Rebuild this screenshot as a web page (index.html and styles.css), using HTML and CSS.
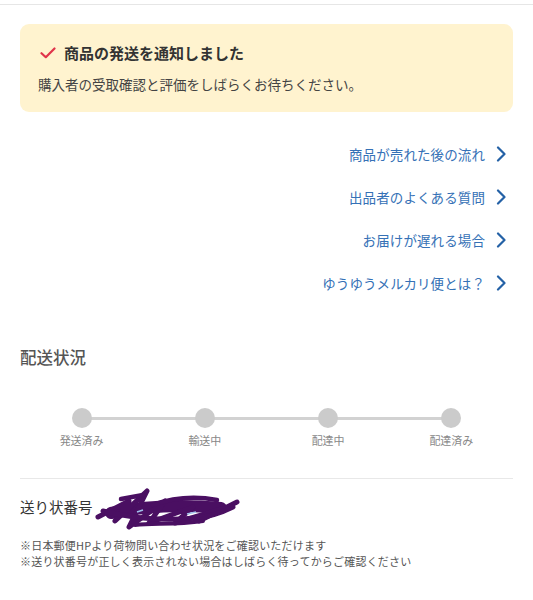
FILE: index.html
```html
<!DOCTYPE html>
<html lang="ja">
<head>
<meta charset="utf-8">
<link rel="stylesheet" href="styles.css">
</head>
<body>
<div class="topbar"></div>
<main class="page">
  <section class="notice">
    <div class="notice-title">
      <svg class="check" viewBox="0 0 16 12" width="16" height="12"><path d="M1.5 6.2 L5.8 10.2 L14.5 1.5" fill="none" stroke="#e0344a" stroke-width="2.2" stroke-linecap="round" stroke-linejoin="round"/></svg>
      <span>商品の発送を通知しました</span>
    </div>
    <p class="notice-text">購入者の受取確認と評価をしばらくお待ちください。</p>
  </section>

  <ul class="links">
    <li><a class="link">商品が売れた後の流れ<svg class="chev" viewBox="0 0 10 16" width="10" height="16"><path d="M2 1.5 L8.5 8 L2 14.5" fill="none" stroke="#2461a6" stroke-width="2.2" stroke-linecap="round" stroke-linejoin="round"/></svg></a></li>
    <li><a class="link">出品者のよくある質問<svg class="chev" viewBox="0 0 10 16" width="10" height="16"><path d="M2 1.5 L8.5 8 L2 14.5" fill="none" stroke="#2461a6" stroke-width="2.2" stroke-linecap="round" stroke-linejoin="round"/></svg></a></li>
    <li><a class="link">お届けが遅れる場合<svg class="chev" viewBox="0 0 10 16" width="10" height="16"><path d="M2 1.5 L8.5 8 L2 14.5" fill="none" stroke="#2461a6" stroke-width="2.2" stroke-linecap="round" stroke-linejoin="round"/></svg></a></li>
    <li><a class="link">ゆうゆうメルカリ便とは？<svg class="chev" viewBox="0 0 10 16" width="10" height="16"><path d="M2 1.5 L8.5 8 L2 14.5" fill="none" stroke="#2461a6" stroke-width="2.2" stroke-linecap="round" stroke-linejoin="round"/></svg></a></li>
  </ul>

  <h2 class="heading">配送状況</h2>

  <div class="progress">
    <div class="track"></div>
    <div class="step"><span class="dot"></span><span class="label">発送済み</span></div>
    <div class="step"><span class="dot"></span><span class="label">輸送中</span></div>
    <div class="step"><span class="dot"></span><span class="label">配達中</span></div>
    <div class="step"><span class="dot"></span><span class="label">配達済み</span></div>
  </div>

  <hr class="divider">

  <div class="tracking">
    <span class="tracking-label">送り状番号</span>
    <span class="tracking-no">
      <span class="tracking-num">000000000000</span>
      <svg class="scribble" viewBox="0 0 145 44" width="145" height="44">
        <g fill="none" stroke="#4a0f62" stroke-linecap="round" stroke-linejoin="round">
          <path d="M16 26 C45 20 85 17 126 21" stroke-width="12"/>
          <path d="M3 30 L34 14 L20 34 L52 4 L34 40 L70 14 L54 36 L98 20 L80 36 L126 22 L104 34 L142 15" stroke-width="5"/>
          <path d="M8 24 C40 32 70 34 100 31 C115 30 126 26 138 20" stroke-width="5"/>
          <path d="M26 12 L48 8 M58 18 C80 10 100 9 122 13" stroke-width="4.5"/>
          <path d="M40 38 C60 36 80 38 108 34" stroke-width="4"/>
        </g>
        <path d="M42 25 L48 23 M92 27 L101 25" stroke="#9fc0ea" stroke-width="1.6"/>
      </svg>
    </span>
  </div>

  <p class="note">※日本郵便HPより荷物問い合わせ状況をご確認いただけます<br>※送り状番号が正しく表示されない場合はしばらく待ってからご確認ください</p>
</main>
</body>
</html>
```

FILE: styles.css
```css
* { box-sizing: border-box; }
body {
  margin: 0;
  background: #ffffff;
  font-family: "Noto Sans CJK JP", "Noto Sans", sans-serif;
  color: #333333;
}
.topbar {
  height: 5px;
  border-bottom: 1px solid #e6e6e6;
}
.page {
  padding: 0 20px;
}
.notice {
  margin-top: 19px;
  background: #fff3cf;
  border-radius: 9px;
  padding: 16px 18px 17px;
}
.notice-title {
  display: flex;
  align-items: center;
  gap: 8px;
  padding-left: 2px;
  font-size: 15px;
  font-weight: 700;
  line-height: 26px;
  color: #333333;
}
.check { display: block; }
.notice-text {
  margin: 7px 0 0;
  font-size: 13.5px;
  line-height: 22px;
  color: #444444;
}
.links {
  list-style: none;
  margin: 20px 0 0;
  padding: 0 7px 0 0;
}
.links li {
  display: flex;
  justify-content: flex-end;
  height: 43px;
  align-items: center;
}
.link {
  display: flex;
  align-items: center;
  gap: 11px;
  font-size: 13.5px;
  letter-spacing: 0.1px;
  color: #3571b6;
  text-decoration: none;
}
.chev { display: block; }
.heading {
  margin: 41px 0 0;
  font-size: 16.5px;
  font-weight: 500;
  line-height: 24px;
  color: #555555;
}
.progress {
  position: relative;
  display: grid;
  grid-template-columns: repeat(4, 1fr);
  margin-top: 39px;
}
.track {
  position: absolute;
  left: 12.5%;
  right: 12.5%;
  top: 9px;
  height: 3px;
  background: #d2d2d2;
}
.step {
  position: relative;
  display: flex;
  flex-direction: column;
  align-items: center;
}
.dot {
  width: 20px;
  height: 20px;
  border-radius: 50%;
  background: #cbcbcb;
}
.label {
  margin-top: 4px;
  font-size: 11px;
  line-height: 16px;
  color: #888888;
}
.divider {
  margin: 30px 0 0;
  border: 0;
  border-top: 1px solid #e8e8e8;
}
.tracking {
  display: flex;
  align-items: center;
  margin-top: 16px;
  height: 24px;
}
.tracking-label {
  font-size: 14.5px;
  line-height: 24px;
  color: #333333;
}
.tracking-no {
  position: relative;
  margin-left: 8px;
  width: 130px;
  height: 24px;
}
.tracking-num {
  font-size: 12px;
  line-height: 24px;
  color: #ffffff;
}
.scribble {
  position: absolute;
  left: -6px;
  top: -8px;
}
.note {
  margin: 18px 0 0;
  font-size: 11px;
  line-height: 16px;
  letter-spacing: 0.2px;
  color: #555555;
}
```
